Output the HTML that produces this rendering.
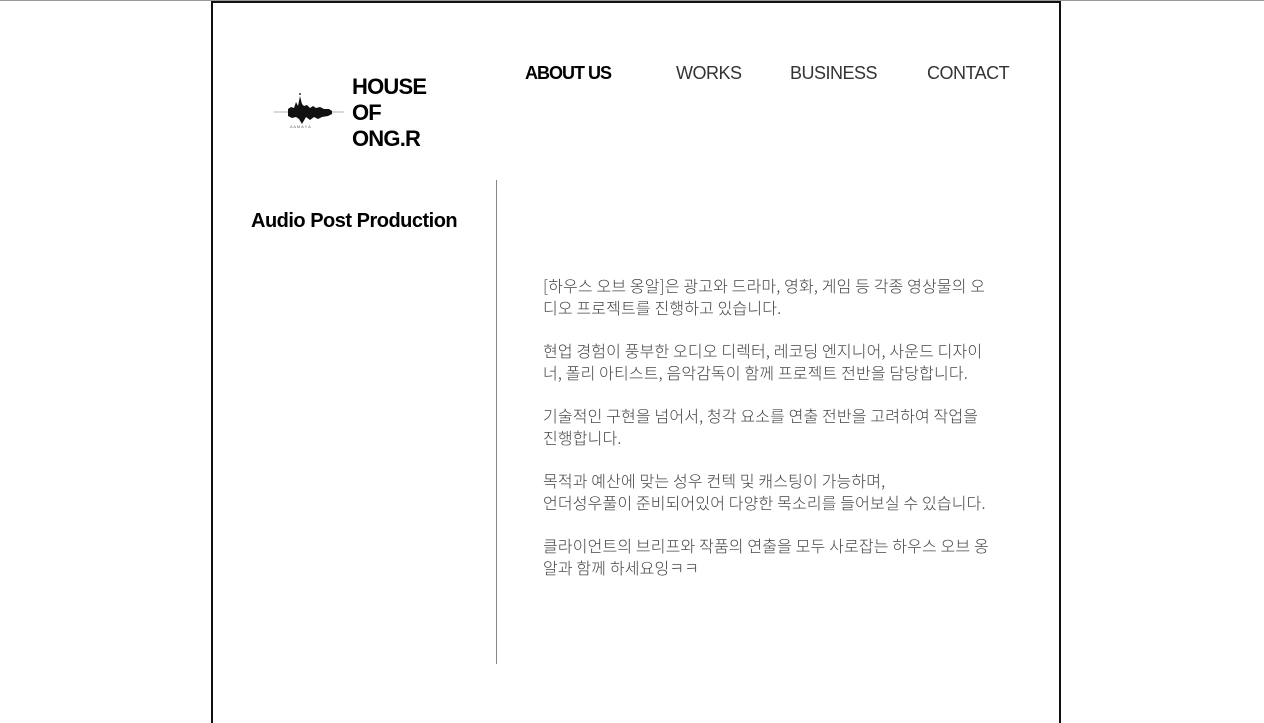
<!DOCTYPE html>
<html><head><meta charset="utf-8"><style>
body{margin:0;background:#fff;width:1264px;height:714px;overflow:hidden;position:relative;font-family:"Liberation Sans","Noto Sans CJK KR",sans-serif}
.top{position:absolute;left:0;top:0;width:1264px;height:1px;background:#999}
.box{position:absolute;left:211px;top:1px;width:846px;height:720px;border:2px solid #111;border-bottom:none}
.logo{position:absolute;left:352px;top:74px;font-weight:bold;font-size:22px;line-height:26px;letter-spacing:-0.8px;color:#000}
.nav{position:absolute;top:63px;font-size:18px;color:#333;letter-spacing:-0.5px;font-weight:300}
.h{position:absolute;left:251px;top:210px;font-weight:bold;font-size:20px;letter-spacing:-0.5px}
.vl{position:absolute;left:496px;top:180px;width:1px;height:484px;background:#888}
.txt{position:absolute;left:543px;top:275px;width:452px;font-size:16px;line-height:21.7px;color:#444;letter-spacing:0.15px;word-break:break-all;font-weight:300;font-family:"Noto Sans CJK KR","Liberation Sans",sans-serif}
.txt p{margin:0 0 21.7px}
</style></head><body>
<div class="top"></div><div class="box"></div>
<svg style="position:absolute;left:274px;top:90px" width="74" height="45" viewBox="0 0 74 45">
<line x1="0" y1="22" x2="70" y2="22" stroke="#999" stroke-width="0.7"/>
<path d="M14 19 L17 17 L20 18 L22 12 L24 16 L26 6 L28 14 L30 16 L33 15 L36 18 L39 16 L42 18 L46 17 L50 19 L55 19 L58 21 L58 24 L54 26 L48 27 L44 29 L40 27 L36 30 L32 27 L28 34 L25 29 L22 27 L18 28 L14 26 Z" fill="#111"/>
<circle cx="26" cy="4" r="1" fill="#333"/>
<text x="16" y="38" font-size="4" fill="#666">A A M A Y A</text>
</svg>
<div class="logo">HOUSE<br>OF<br>ONG.R</div>
<div class="nav" style="left:525px;font-weight:bold;color:#000;letter-spacing:-1px">ABOUT US</div>
<div class="nav" style="left:676px">WORKS</div>
<div class="nav" style="left:790px">BUSINESS</div>
<div class="nav" style="left:927px">CONTACT</div>
<div class="h">Audio Post Production</div>
<div class="vl"></div>
<div class="txt">
<p>[하우스 오브 옹알]은 광고와 드라마, 영화, 게임 등 각종 영상물의 오디오 프로젝트를 진행하고 있습니다.</p>
<p>현업 경험이 풍부한 오디오 디렉터, 레코딩 엔지니어, 사운드 디자이너, 폴리 아티스트, 음악감독이 함께 프로젝트 전반을 담당합니다.</p>
<p>기술적인 구현을 넘어서, 청각 요소를 연출 전반을 고려하여 작업을 진행합니다.</p>
<p>목적과 예산에 맞는 성우 컨텍 및 캐스팅이 가능하며,<br>언더성우풀이 준비되어있어 다양한 목소리를 들어보실 수 있습니다.</p>
<p>클라이언트의 브리프와 작품의 연출을 모두 사로잡는 하우스 오브 옹알과 함께 하세요잉ㅋㅋ</p>
</div>
</body></html>
